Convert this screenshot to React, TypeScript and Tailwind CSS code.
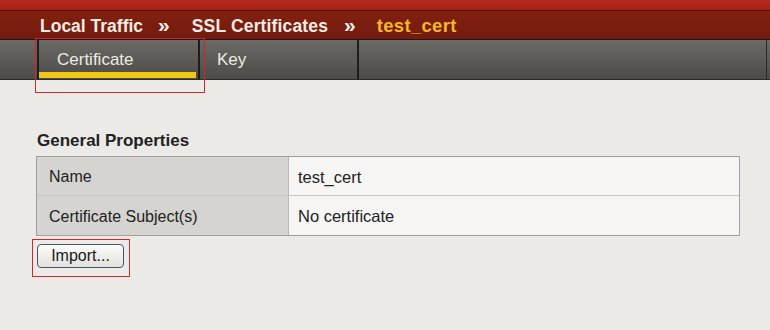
import React from "react";

export default function App() {
  const font = { fontFamily: '"Liberation Sans", Arial, sans-serif' };
  return (
    <div className="relative w-[770px] h-[330px] bg-[#ebeae6] overflow-hidden" style={font}>
      {/* header */}
      <div className="h-[10px] bg-gradient-to-b from-[#b42a1c] to-[#a32218]" />
      <div className="h-[1px] bg-[#4a120b]" />
      <div className="h-[28px] bg-gradient-to-b from-[#82200f] to-[#731b10] flex items-center pl-[40px] pt-[2px] text-[17.5px] font-bold text-[#f1ece2]">
        <span>Local Traffic</span>
        <span className="ml-[15px] mr-[22px] text-[21px] leading-none -translate-y-[2px]">»</span>
        <span className="tracking-[0.15px]">SSL Certificates</span>
        <span className="ml-[16px] mr-[21px] text-[21px] leading-none -translate-y-[2px]">»</span>
        <span className="text-[#f4b62a] text-[18.5px] tracking-[0.3px]">test_cert</span>
      </div>
      <div className="h-[1px] bg-[#2a1410]" />
      {/* tab bar */}
      <div className="h-[40px] flex bg-gradient-to-b from-[#6c6a66] to-[#4c4b47] border-b border-[#2a2a28]">
        <div className="w-[37px]" />
        <div className="w-[2px] bg-[#1e1e1c]" />
        <div className="relative w-[159px] flex items-center pl-[18px] pt-[1px] text-[17px] text-[#ecebe4]">
          Certificate
          <div className="absolute left-0 right-[2px] bottom-[1px] h-[6px] bg-[#f2c816]" />
        </div>
        <div className="w-[2px] bg-[#1e1e1c]" />
        <div className="w-[157px] flex items-center pl-[17px] pt-[1px] text-[17px] text-[#ecebe4]">Key</div>
        <div className="w-[2px] bg-[#1e1e1c]" />
        <div className="flex-1 border-r border-[#2a2a28] mr-[3px]" />
      </div>

      {/* body */}
      <div className="pl-[36px] pt-[51px]">
        <div className="text-[17px] font-bold text-[#222] leading-[20px] pl-[1px]">General Properties</div>
        <div className="mt-[5px] w-[704px] border border-[#a19f9b] text-[16px] text-[#222]">
          <div className="flex h-[39px] border-b border-[#c6c5c1]">
            <div className="w-[252px] bg-[#d5d4d0] border-r border-[#b9b8b4] flex items-center pl-[12px] pt-[2px]">Name</div>
            <div className="flex-1 bg-[#f6f5f3] flex items-center pl-[9px] pt-[2px] text-[16.5px]">test_cert</div>
          </div>
          <div className="flex h-[39px]">
            <div className="w-[252px] bg-[#d5d4d0] border-r border-[#b9b8b4] flex items-center pl-[12px] pt-[2px]">Certificate Subject(s)</div>
            <div className="flex-1 bg-[#f6f5f3] flex items-center pl-[9px] pt-[2px] text-[16.5px]">No certificate</div>
          </div>
        </div>
        <button className="mt-[8px] ml-[1px] w-[87px] h-[24px] rounded-[4px] border border-[#44566a] bg-gradient-to-b from-[#fbfbf9] to-[#e2e1dc] text-[16px] text-[#1a1a1a] flex items-center justify-center pb-[1px]">
          Import...
        </button>
      </div>

      {/* annotation overlays */}
      <div className="absolute left-[35px] top-[38px] w-[170px] h-[55px] border-[1.5px] border-[#d02828]" />
      <div className="absolute left-[32px] top-[239px] w-[98px] h-[38px] border-[1.5px] border-[#d02828]" />
    </div>
  );
}
